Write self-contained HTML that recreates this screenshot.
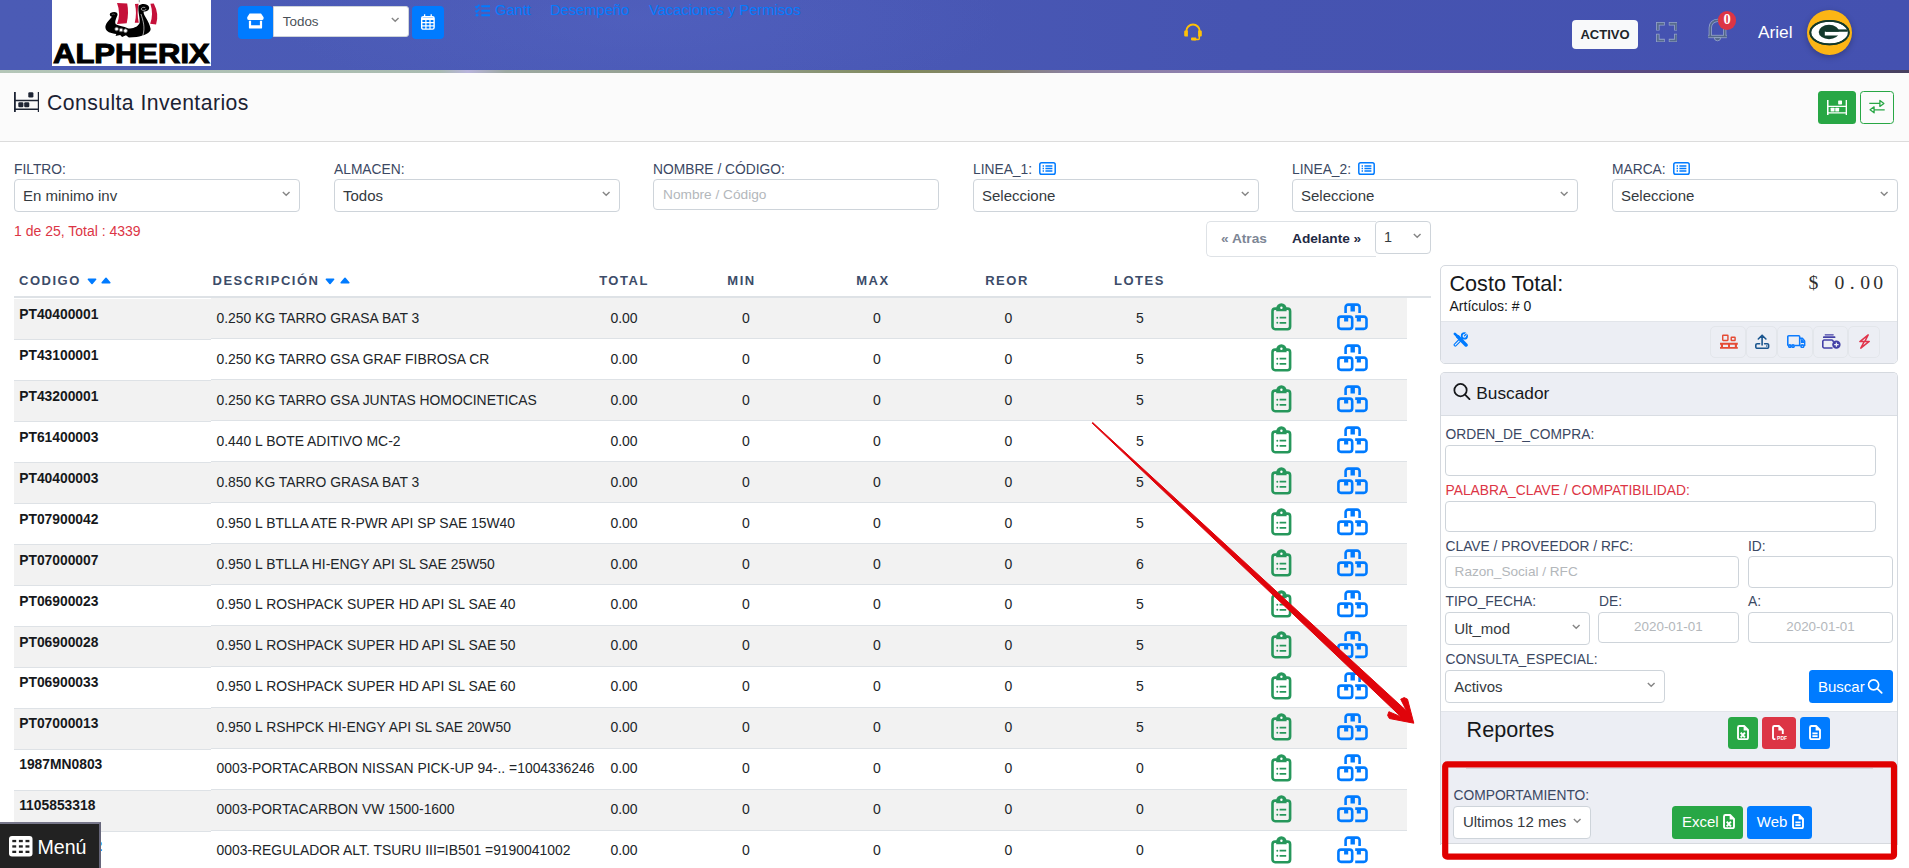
<!DOCTYPE html>
<html lang="es">
<head>
<meta charset="utf-8">
<title>Consulta Inventarios</title>
<style>
*{box-sizing:border-box;margin:0;padding:0}
html,body{width:1909px;height:868px;overflow:hidden;background:#fff}
body{font-family:"Liberation Sans",Arial,sans-serif;font-size:14.4px;color:#212529;position:relative}
svg{display:block}
.abs{position:absolute}

/* ---------- top bar ---------- */
.topbar{position:absolute;left:0;top:0;width:1909px;height:70px;background:#4a58b4;
 background-image:radial-gradient(ellipse 520px 120px at 640px 20px,rgba(88,104,200,.35),rgba(88,104,200,0) 70%),linear-gradient(90deg,#4b5bb5 0%,#4a59b6 40%,#4654b1 65%,#4451b0 100%)}
.strip{position:absolute;left:0;top:70px;width:1909px;height:4px;background:linear-gradient(180deg,rgba(255,255,255,0) 0,rgba(255,255,255,0) 72%,rgba(251,251,251,.75) 100%),linear-gradient(90deg,#b4c6b8 0%,#a9bbb0 23%,#b8b4dc 24.500%,#9da9a2 26.500%,#8f9a86 40%,#808a5c 47%,#84846c 52%,#8a80a0 56%,#8f7fb2 65%,#7a5fa2 75%,#5a4a82 85%,#47405f 100%)}
.logo{position:absolute;left:52px;top:0;width:159px;height:66px;background:#fff;overflow:hidden}
.logo .word{position:absolute;left:1.300px;top:38.100px;font-weight:700;font-size:27.200px;line-height:32px;color:#000;white-space:nowrap;transform-origin:0 0;transform:scaleX(1.140);letter-spacing:0;-webkit-text-stroke:1px #000}
.hbtn{position:absolute;top:6px;height:33px;background:#007bff;border-radius:4px;display:flex;align-items:center;justify-content:center}
.hsel{position:absolute;left:273px;top:6px;width:136px;height:31px;background:#fff;border:1px solid #ced4da;border-radius:0 3px 3px 0;font-size:13.400px;color:#495057;padding:0 0 0 8.800px;line-height:30px}
.chev{position:absolute;right:8.200px;top:50%;margin-top:-4.600px;width:8.400px;height:6.200px}
.nav{position:absolute;top:2px;left:475px;font-size:14.700px;line-height:17px;color:#047bfd;white-space:nowrap}
.nav a{color:inherit;text-decoration:none;position:absolute;top:0;white-space:nowrap}
.badge-act{position:absolute;left:1572px;top:20px;width:66px;height:29px;background:#f8f9fa;border-radius:4px;font-weight:700;font-size:13px;line-height:29px;text-align:center;color:#212529}
.uname{position:absolute;left:1758px;top:22px;font-size:17.3px;line-height:20px;color:#fff}
.avatar{position:absolute;left:1807.200px;top:9.900px;width:45px;height:45px;border-radius:50%;background:#fcb515;box-shadow:0 2px 6px rgba(0,0,0,.25)}
.notif{position:absolute;left:1718px;top:11.400px;width:18.200px;height:18.200px;border-radius:50%;background:#dc3545;color:#fff;font-family:"Liberation Serif",serif;font-weight:700;font-size:14.500px;line-height:17.600px;text-align:center}

/* ---------- title bar ---------- */
.titlebar{position:absolute;left:0;top:73px;width:1909px;height:69px;background:#fbfbfb;border-bottom:1px solid #dcdcdc}
.titlebar h1{position:absolute;left:47px;top:17px;font-weight:400;font-size:21.2px;line-height:26px;letter-spacing:.43px;color:#1b2233;white-space:nowrap}
.tbtn{position:absolute;top:17.900px;height:32.900px;border-radius:3.500px;display:flex;align-items:center;justify-content:center}

/* ---------- filters ---------- */
.fld{position:absolute;top:161.200px;width:286px}
.fld label,.lbl{display:block;font-size:13.800px;line-height:17px;color:#3b4863;white-space:nowrap}
.sel{position:relative;height:33px;border:1px solid #ced4da;border-radius:4px;background:#fff;font-size:15px;line-height:31px;color:#343a40;padding-left:8px;white-space:nowrap;overflow:hidden}
.inp{position:relative;height:30.700px;border:1px solid #ced4da;border-radius:4px;background:#fff;font-size:13.700px;line-height:29px;color:#b3b7bb;padding-left:9px;white-space:nowrap;overflow:hidden}
.fld .sel,.fld .inp{margin-top:.8px}
.count{position:absolute;left:14px;top:223.400px;font-size:14px;line-height:17px;color:#dc3545;white-space:nowrap}
.pager{position:absolute;left:1206px;top:221px;width:170px;height:36px;border:1px solid #dee2e6;border-right:0;border-radius:5px 0 0 5px;font-weight:700;font-size:13.7px;line-height:34px;white-space:nowrap}
.pager span{position:absolute;top:0}

/* ---------- table ---------- */
table.inv{position:absolute;left:14px;top:266px;width:1417px;border-collapse:separate;border-spacing:0;table-layout:fixed}
.inv thead th{height:32px;padding:0;border-bottom:2px solid #dee2e6;font-weight:700;font-size:13px;letter-spacing:1.520px;color:#3c4c69;text-align:center;vertical-align:top;line-height:17px;padding-top:5.500px;white-space:nowrap}
.inv thead th.l{text-align:left;padding-left:5px}
.inv thead th.d{padding-left:1.5px}
.inv thead th b{position:relative;font-weight:700}
.inv tbody td,.inv tbody th{height:41px;padding:0 0 .2px;border-bottom:1px solid #dee2e6;text-align:center;vertical-align:middle;font-size:14px;line-height:20px;white-space:nowrap;color:#212529}
.inv tbody tr:nth-child(odd) td,.inv tbody tr:nth-child(odd) th{background:#f2f2f2}
.inv tbody th{position:relative;top:1px;text-align:left;vertical-align:top;font-weight:700;font-size:13.850px;padding:6.800px 0 0 5.200px;line-height:17px;color:#16181b}
.inv tbody td.d{text-align:left;padding-left:5.500px;font-size:13.900px}
.inv tbody tr:nth-child(n+8) td{padding-bottom:2.200px}
.inv tbody tr:nth-child(n+10) th{padding-top:5.800px}
.inv tbody td.x{background:#fff !important;border-bottom-color:#fff}
.inv svg{margin:0 auto}
.inv tbody td svg{position:relative;top:-1px}
.inv tbody td:nth-child(9),.inv tbody td:nth-child(10){padding-bottom:0 !important}
.sd,.su{display:inline-block;position:relative;margin:0 !important}
.sd{left:5.9px;top:0.6px}
.su{left:10.6px;top:-1px}

/* ---------- aside ---------- */
.card{position:absolute;left:1440px;width:458px;background:#fff;border:1px solid #d5d9df;border-radius:5px;overflow:hidden}
.soft{background:#eceef4}
.cost{top:265px;height:99px}
.cost h2{position:absolute;left:8.500px;top:5.500px;font-weight:400;font-size:21.600px;line-height:24px;color:#16181b;white-space:nowrap}
.cost .amt{position:absolute;right:10.800px;top:4.200px;font-family:"Liberation Serif","DejaVu Serif",serif;font-size:19.700px;letter-spacing:3.100px;word-spacing:4.900px;line-height:24px;color:#2f2f2f;white-space:pre}
.cost .amt i{font-style:normal;margin:0 2.450px}
.cost .art{position:absolute;left:8.500px;top:31.700px;font-size:14px;line-height:16px;color:#16181b}
.cost .bar{position:absolute;left:0;top:55px;width:456px;height:43px;border-top:1px solid #e2e5ea}
.bgroup{position:absolute;left:269.200px;top:4.300px;height:32px;display:flex}
.bgroup span{display:flex;align-items:center;justify-content:center;height:32.200px;border:1px solid #e3e6eb;border-radius:5px;background:#eceef4;padding-bottom:1.500px;padding-left:.6px}
.srch{top:372px;height:472.500px;border-bottom:0;border-radius:5px 5px 0 0}
.srch .hd{position:absolute;left:0;top:0;width:456px;height:43px;border-bottom:1px solid #d9dde3}
.srch .hd h3{position:absolute;left:35.300px;top:9.600px;font-weight:400;font-size:17.3px;line-height:20px;color:#16181b}
.srch .lbl{position:absolute}
.srch .inp,.srch .sel{position:absolute}
.btn{position:absolute;border-radius:3.500px;color:#fff;font-size:15px;white-space:nowrap;display:flex;align-items:center;padding-bottom:1.200px}
.ft{position:absolute;left:0;top:338.400px;width:456px;height:132.700px;border-top:1px solid #e2e5ea;border-bottom:1px solid #d6d9de}
.ft h4{position:absolute;left:25.600px;top:5.200px;font-weight:400;font-size:21.600px;line-height:24px;color:#16181b}
.ft hr{position:absolute;left:24.500px;top:55.600px;width:407px;border:0;border-top:1px solid #d3d6dc}

.menu{position:absolute;left:0;top:822.300px;width:101px;height:50px;background:#222;border:0;border-top:2px solid #77778a;border-right:2px solid #66667a;color:#fff;font-family:inherit;font-size:19.600px;line-height:24px;text-align:left}
.menu svg{position:absolute;left:9px;top:11.700px}
.menu span{position:absolute;left:37.500px;top:10.600px}
.li{display:inline-block;margin-left:7.300px;vertical-align:-.8px}
</style>
</head>
<body>

<header class="topbar">
  <div class="logo">
<svg class="abs" style="left:43px;top:0" width="75" height="42" viewBox="0 0 1550 868">
<path d="M915 0V48" stroke="#111" stroke-width="9"/>
<path d="M455 60L665 72Q705 270 655 478L455 497Q540 280 455 60Z" fill="#c5113a"/>
<path d="M825 85L900 75Q860 270 905 470L822 472Q870 280 825 85Z" fill="#c5113a"/>
<path d="M1145 75L1215 72Q1330 290 1262 505L1140 490Q1215 290 1145 75Z" fill="#c5113a"/>
<path d="M350 345C280 430 210 490 215 570C220 660 330 690 440 705L425 745L520 722L560 765L640 728L700 775L860 765C1010 740 1150 680 1150 600C1120 430 990 320 1005 240C1085 240 1135 200 1115 140C1080 70 960 70 900 120C880 250 940 380 920 480C880 560 780 590 690 590C600 540 450 520 430 500C400 450 440 380 465 310C480 240 380 230 320 270C290 300 310 340 350 345Z" fill="#000"/>
<path d="M950 290C990 420 1045 560 985 750" fill="none" stroke="#fff" stroke-width="13"/>
<path d="M1040 160C1000 130 940 170 960 200C990 230 1050 215 1060 185" fill="none" stroke="#ddd" stroke-width="14"/>
<path d="M410 300C390 280 350 290 350 310" fill="none" stroke="#888" stroke-width="12"/>
<g fill="#fff" stroke="#555" stroke-width="16"><circle cx="447" cy="600" r="38"/><circle cx="538" cy="620" r="38"/><circle cx="630" cy="636" r="40"/></g>
</svg>
    <span class="word">ALPHERIX</span>
  </div>
  <div class="hbtn" style="left:238px;width:35px;padding-bottom:2.400px;padding-right:.4px"><svg width="17" height="16" viewBox="0 0 17 16"><path d="M2.600 .400h11.400l2.600 3.800v1.300a1.700 1.700 0 0 1-1.700 1.500H1.900A1.700 1.700 0 0 1 .2 5.500V4.200z" fill="#fff"/><path d="M1.900 7.800h2.200v4.400h8.800V7.800h2.200v6.600a1.200 1.200 0 0 1-1.200 1.200H3.100a1.200 1.200 0 0 1-1.200-1.200z" fill="#fff"/></svg></div>
  <div class="hsel">Todos<svg class="chev" viewBox="0 0 10 7"><path d="M1 1l4 4 4-4" fill="none" stroke="#868686" stroke-width="1.7"/></svg></div>
  <div class="hbtn" style="left:412px;width:32px;padding-bottom:2px"><svg width="14" height="16" viewBox="0 0 14 16"><path d="M3.600 .200v2.600M10.200 .200v2.600" stroke="#fff" stroke-width="1.300"/><rect x=".7" y="2.700" width="12.400" height="12.400" rx="1.600" fill="none" stroke="#fff" stroke-width="1.400"/><path d="M.7 5.400h12.400M.7 8.700h12.400M.7 11.900h12.400M4.900 5.400v9.700M9 5.400v9.700" stroke="#fff" stroke-width="1.200"/><path d="M.7 3.600h12.400v1.800H.7z" fill="#fff"/></svg></div>
  <nav class="nav">
    <svg class="abs" style="left:0;top:1.800px" width="15.400" height="13" viewBox="0 0 15.400 13"><g fill="none" stroke="#007bff" stroke-width="1.600"><path d="M.4 2.200l1.300 1.300L4.400.8M.4 6.600l1.300 1.300 2.700-2.700"/><path d="M6.300 2.300h9M6.300 6.700h9M6.300 11.200h9" stroke-width="1.900"/></g><circle cx="2" cy="11.200" r="1.400" fill="#007bff"/></svg>
    <a style="left:20px">Gantt</a>
    <a style="left:75px">Desempeño</a>
    <a style="left:174px">Vacaciones y Permisos</a>
  </nav>
  <svg class="abs" style="left:1184px;top:22.500px" width="18" height="18" viewBox="0 0 18 18"><path d="M2.300 9.500V8.200a6.700 6.700 0 0 1 13.400 0v1.300" fill="none" stroke="#ffc107" stroke-width="1.900"/><path d="M.2 8.400a1 1 0 0 1 1-1h2.700v6H1.200a1 1 0 0 1-1-1zM14.100 7.400h2.700a1 1 0 0 1 1 1v4a1 1 0 0 1-1 1h-2.700z" fill="#ffc107"/><path d="M15.300 13v2.400a1 1 0 0 1-1 1H9.600" fill="none" stroke="#ffc107" stroke-width="1.500"/><rect x="7" y="14.600" width="5.400" height="2.800" rx=".8" fill="#ffc107"/></svg>
  <svg class="abs" style="left:1655.700px;top:21.700px" width="21.600" height="20.400" viewBox="0 0 21.600 20.400"><g fill="none" stroke="#a3b2d2" stroke-opacity=".85" stroke-width="3.500"><path d="M1.800 8.600V1.800h7M12.800 1.800h7v6.800M19.800 11.800v6.800h-7M8.800 18.600h-7v-6.800"/></g><g fill="none" stroke="#566b8c" stroke-width="1.900"><path d="M1.800 7.900V1.800h6.300M13.500 1.800h6.300v6.100M19.800 12.500v6.100h-6.300M8.100 18.600H1.800v-6.100"/></g></svg>
  <svg class="abs" style="left:1706.700px;top:18.200px" width="21" height="24" viewBox="0 0 21 24"><g fill="none" stroke="#a3b2d2" stroke-opacity=".85" stroke-width="3.300" stroke-linejoin="round"><path d="M3.300 18.200V9.500a7.200 7.200 0 0 1 14.400 0v8.700"/><path d="M1.200 18.500h18.600"/></g><g fill="none" stroke="#536889" stroke-width="1.700" stroke-linejoin="round"><path d="M3.300 18.200V9.500a7.200 7.200 0 0 1 14.400 0v8.700"/><path d="M1.200 18.500h18.600"/></g><path d="M7.300 19.600h6.400a3.200 3.200 0 0 1-6.400 0z" fill="#536889" stroke="#a3b2d2" stroke-opacity=".8" stroke-width=".9"/></svg>
  <div class="badge-act">ACTIVO</div>
  <div class="notif">0</div>
  <div class="uname">Ariel</div>
  <div class="avatar"><svg width="45" height="45" viewBox="0 0 45 45"><ellipse cx="22.500" cy="22.600" rx="20.100" ry="12.700" fill="#12382b"/><ellipse cx="22.500" cy="22.600" rx="18.300" ry="10.900" fill="#fff"/><ellipse cx="22" cy="22" rx="10.300" ry="7.200" fill="#12382b"/><path d="M17.800 21.700h23v3.800H17.800z" fill="#fff"/><path d="M31.300 21.700h10v6h-10z" fill="#fff"/><path d="M18.900 19.400h21.600v2.350H18.900z" fill="#12382b"/><ellipse cx="22.500" cy="22.600" rx="19.200" ry="11.800" fill="none" stroke="#12382b" stroke-width="1.800"/></svg></div>
</header>
<div class="strip"></div>

<section class="titlebar">
  <svg class="abs" style="left:13.800px;top:19.200px" width="25.600" height="20.200" viewBox="0 0 25.600 20.200"><path d="M.9 0v20.200M24.700 0v20.200" stroke="#1d2434" stroke-width="1.800"/><path d="M.9 8.400h23.800M.9 17.300h23.800" stroke="#1d2434" stroke-width="1.500"/><g fill="#1d2434"><rect x="14.300" y=".3" width="5.100" height="5.100" rx="1.200"/><rect x="4.300" y="10.200" width="5.100" height="5.100" rx="1.200"/><rect x="10.200" y="10.200" width="5.100" height="5.100" rx="1.200"/></g></svg>
  <h1>Consulta Inventarios</h1>
  <div class="tbtn" style="left:1818.100px;width:38.100px;background:#28a745"><svg width="20.200" height="15.400" viewBox="0 0 21 16"><path d="M.8 0v16M20.200 0v16" stroke="#fff" stroke-width="1.600"/><path d="M.8 6.600h19.400M.8 13.400h19.400" stroke="#fff" stroke-width="1.500"/><g fill="#fff"><rect x="11.600" y=".4" width="4" height="4.200" rx=".6"/><rect x="3.800" y="8" width="4" height="4" rx=".6"/><rect x="8.600" y="8" width="4" height="4" rx=".6"/></g></svg></div>
  <div class="tbtn" style="left:1860.100px;width:34.200px;background:transparent;border:1px solid #28a745;padding-bottom:1.600px"><svg width="16" height="15" viewBox="0 0 16 15"><g fill="none" stroke="#28a745" stroke-width="1.300" stroke-linejoin="round"><path d="M.3 4.400h10.600M.3 4.400M10.900 1.400l4 3-4 3z"/><path d="M15.700 10.800H5.100M5.100 7.800l-4 3 4 3z"/></g></svg></div>
</section>

<form class="filters" onsubmit="return false">
  <div class="fld" style="left:14px"><label>FILTRO:</label><div class="sel">En minimo inv<svg class="chev" viewBox="0 0 10 7"><path d="M1 1l4 4 4-4" fill="none" stroke="#868686" stroke-width="1.7"/></svg></div></div>
  <div class="fld" style="left:334px"><label>ALMACEN:</label><div class="sel">Todos<svg class="chev" viewBox="0 0 10 7"><path d="M1 1l4 4 4-4" fill="none" stroke="#868686" stroke-width="1.7"/></svg></div></div>
  <div class="fld" style="left:653px"><label>NOMBRE / CÓDIGO:</label><div class="inp">Nombre / Código</div></div>
  <div class="fld" style="left:973px"><label>LINEA_1:<svg class="li" width="17" height="13" viewBox="0 0 17 13"><rect x=".8" y=".8" width="15.400" height="11.400" rx="1.800" fill="none" stroke="#007bff" stroke-width="1.500"/><path d="M3.600 4h1.400M3.600 6.500h1.400M3.600 9h1.400" stroke="#007bff" stroke-width="1.500"/><path d="M6.400 4h7M6.400 6.500h7M6.400 9h7" stroke="#007bff" stroke-width="1.500"/></svg></label><div class="sel">Seleccione<svg class="chev" viewBox="0 0 10 7"><path d="M1 1l4 4 4-4" fill="none" stroke="#868686" stroke-width="1.7"/></svg></div></div>
  <div class="fld" style="left:1292px"><label>LINEA_2:<svg class="li" width="17" height="13" viewBox="0 0 17 13"><rect x=".8" y=".8" width="15.400" height="11.400" rx="1.800" fill="none" stroke="#007bff" stroke-width="1.500"/><path d="M3.600 4h1.400M3.600 6.500h1.400M3.600 9h1.400" stroke="#007bff" stroke-width="1.500"/><path d="M6.400 4h7M6.400 6.500h7M6.400 9h7" stroke="#007bff" stroke-width="1.500"/></svg></label><div class="sel">Seleccione<svg class="chev" viewBox="0 0 10 7"><path d="M1 1l4 4 4-4" fill="none" stroke="#868686" stroke-width="1.7"/></svg></div></div>
  <div class="fld" style="left:1612px"><label>MARCA:<svg class="li" width="17" height="13" viewBox="0 0 17 13"><rect x=".8" y=".8" width="15.400" height="11.400" rx="1.800" fill="none" stroke="#007bff" stroke-width="1.500"/><path d="M3.600 4h1.400M3.600 6.500h1.400M3.600 9h1.400" stroke="#007bff" stroke-width="1.500"/><path d="M6.400 4h7M6.400 6.500h7M6.400 9h7" stroke="#007bff" stroke-width="1.500"/></svg></label><div class="sel">Seleccione<svg class="chev" viewBox="0 0 10 7"><path d="M1 1l4 4 4-4" fill="none" stroke="#868686" stroke-width="1.7"/></svg></div></div>
</form>
<div class="count">1 de 25, Total : 4339</div>
<div class="pager"><span style="left:14px;color:#7d8695">« Atras</span><span style="left:85px;color:#1f2a44">Adelante »</span></div>
<div class="sel abs" style="left:1375px;top:221px;width:56px;height:33px;font-size:14.4px">1<svg class="chev" viewBox="0 0 10 7"><path d="M1 1l4 4 4-4" fill="none" stroke="#868686" stroke-width="1.7"/></svg></div>

<svg width="0" height="0" style="position:absolute"><defs>
<symbol id="i-clip" viewBox="0 0 21 28"><rect x="1.5" y="5.6" width="17.6" height="20.6" rx="2.6" fill="none" stroke="#26975b" stroke-width="2.6"/><path d="M5.200 8.300V5.400A5.200 5.200 0 0 1 15.600 5.400V8.300z" fill="#26975b"/><circle cx="10.400" cy="4.700" r="1.200" fill="#fff"/><circle cx="6.3" cy="14.7" r=".95" fill="#26975b"/><circle cx="6.3" cy="19.8" r=".95" fill="#26975b"/><path d="M8.6 14.7h6.6M8.6 19.8h6.6" stroke="#26975b" stroke-width="1.7" fill="none"/></symbol>
<symbol id="i-box" viewBox="0 0 31 28"><g fill="none" stroke="#007bff" stroke-width="2.6"><path d="M8.6 10V4.2a2.6 2.6 0 0 1 2.6-2.6h8.8a2.6 2.6 0 0 1 2.6 2.6V10"/><rect x="1.4" y="13.6" width="13.8" height="12.3" rx="2.6"/><path d="M18.2 13.6h8.7a2.6 2.6 0 0 1 2.6 2.6v7.1a2.6 2.6 0 0 1-2.6 2.6h-8.7"/></g><path d="M13.5 1.6h4.4v7h-4.4zM7.1 13.6h4.1v5h-4.1zM19.8 13.6h4.1v5h-4.1z" fill="#007bff"/></symbol>
<symbol id="i-cd" viewBox="0 0 10 7"><path d="M1.4 1.3h7.2L5 5.4z" fill="#007bff" stroke="#007bff" stroke-width="1.6" stroke-linejoin="round"/></symbol>
<symbol id="i-cu" viewBox="0 0 10 7"><path d="M1.2 5.7h7.6L5 1.4z" fill="#007bff" stroke="#007bff" stroke-width="1.6" stroke-linejoin="round"/></symbol>
<symbol id="i-search" viewBox="0 0 18 18"><circle cx="7.700" cy="7.300" r="6.300" fill="none" stroke="#16181b" stroke-width="1.800"/><path d="M12.300 11.900l4.800 4.800" stroke="#16181b" stroke-width="1.900" stroke-linecap="round"/></symbol>
<symbol id="i-search-w" viewBox="0 0 19 18"><circle cx="7.6" cy="7.4" r="5.8" fill="none" stroke="#fff" stroke-width="1.9"/><path d="M11.9 11.7l5 5" stroke="#fff" stroke-width="2" stroke-linecap="round"/></symbol>
<symbol id="i-xls" viewBox="0 0 12 15.200"><path d="M1 2.500A1.500 1.500 0 0 1 2.500 1h4.600L11 4.900v7.800a1.500 1.500 0 0 1-1.500 1.500h-7A1.500 1.500 0 0 1 1 12.700z" fill="none" stroke="#fff" stroke-width="1.900" stroke-linejoin="round"/><path d="M6.600 .8l4.600 4.600H6.600z" fill="#fff"/><path d="M3.700 7.600l4.200 4.800M7.900 7.600l-4.200 4.800" stroke="#fff" stroke-width="1.900"/></symbol>
<symbol id="i-doc" viewBox="0 0 12 15.200"><path d="M1 2.500A1.500 1.500 0 0 1 2.500 1h4.600L11 4.900v7.800a1.500 1.500 0 0 1-1.500 1.500h-7A1.500 1.500 0 0 1 1 12.700z" fill="none" stroke="#fff" stroke-width="1.900" stroke-linejoin="round"/><path d="M6.600 .8l4.600 4.600H6.600z" fill="#fff"/><path d="M3.400 8.300h5.200M3.400 11.100h5.200" stroke="#fff" stroke-width="1.700"/></symbol>
<symbol id="i-pdf" viewBox="0 0 15.200 15.200"><path d="M3.400 14.200H2.500A1.500 1.500 0 0 1 1 12.700V2.500A1.500 1.500 0 0 1 2.500 1h4.400L10.800 4.900V9" fill="none" stroke="#fff" stroke-width="1.900" stroke-linejoin="round"/><path d="M6.400 .8l4.600 4.600H6.400z" fill="#fff"/><text x="5.100" y="14.800" font-family="Liberation Sans, sans-serif" font-weight="700" font-size="5.800" fill="#fff" textLength="10" lengthAdjust="spacingAndGlyphs">PDF</text></symbol>
<symbol id="i-tools" viewBox="0 0 15 15"><g stroke="#007bff" fill="none" stroke-linecap="round"><path d="M2.200 12.900l5-5.100" stroke-width="3.400"/><path d="M2.200 12.900l5-5.100" stroke="#eceef4" stroke-width="1.200"/><circle cx="11.300" cy="3.900" r="2.700" stroke-width="1.800" fill="#eceef4"/><path d="M11.300 3.900l3.200-3.200" stroke="#eceef4" stroke-width="2.400" stroke-linecap="butt"/><path d="M11.400 3.800l1.700-1.700" stroke-width="1.300"/><path d="M1.800 1.800l3.600 3.600" stroke-width="2.600"/><path d="M4.600 4.600l8.300 8.300" stroke-width="3.600"/></g></symbol>
<symbol id="i-pallet" viewBox="0 0 19 15"><g fill="none" stroke="#e54b35" stroke-width="1.5"><rect x="2.8" y="1" width="5.4" height="5.4" rx=".6"/><rect x="11.6" y="3.2" width="4" height="3.2" rx=".5"/></g><path d="M0 8.800h18.400v2.100H0zM0 13.100h18.400v1.900H0zM.9 10.800h2.200v2.400H.9zM8.300 10.800h2v2.400h-2zM15.300 10.800h2.200v2.400h-2.200z" fill="#e54b35"/></symbol>
<symbol id="i-upload" viewBox="0 0 15 15"><g fill="none" stroke="#1b568f" stroke-width="1.6" stroke-linecap="round" stroke-linejoin="round"><path d="M7.100 10.800V1.200M3.300 4.900L7.100 1.100l3.800 3.800"/><path d="M4.600 9.600H2.200a1.400 1.400 0 0 0-1.400 1.400v1.800a1.400 1.400 0 0 0 1.400 1.400h10a1.400 1.400 0 0 0 1.400-1.400V11a1.400 1.400 0 0 0-1.400-1.400H9.600"/></g><circle cx="11.700" cy="11.900" r=".75" fill="#1b568f"/></symbol>
<symbol id="i-truck" viewBox="0 0 19 13.400"><g fill="none" stroke="#0d7bfd" stroke-width="1.600" stroke-linejoin="round"><path d="M1.500 10.700A1 1 0 0 1 .8 9.700V1.800a1 1 0 0 1 1-1h10.100a1 1 0 0 1 1 1v8.900H7.600"/><path d="M12.900 3.400h2.700l2.500 2.900v4.400h-.8M12.900 10.700h1"/><circle cx="2.900" cy="11.300" r="1.250"/><circle cx="6.100" cy="11.300" r="1.250"/><circle cx="15.600" cy="11.400" r="1.350"/></g><path d="M14.200 4.300h1.100l2 2.300v1.500h-3.100z" fill="#0d7bfd"/></symbol>
<symbol id="i-wallet" viewBox="0 0 19 15"><g fill="none" stroke="#4340a6" stroke-linecap="round"><path d="M3.200 .8h8" stroke-width="1.200"/><path d="M1.800 3.100h10.800" stroke-width="1.700"/><path d="M10 13.900H2.200A1.400 1.400 0 0 1 .8 12.500V7.400A1.400 1.400 0 0 1 2.200 6h7.600a1.400 1.400 0 0 1 1.400 1.400" stroke-width="1.600"/></g><circle cx="14.400" cy="10.600" r="4.200" fill="#4340a6"/><path d="M14.400 8.400v4.400M12.200 10.600h4.400" stroke="#eef0f5" stroke-width="1.300"/></symbol>
<symbol id="i-bolt" viewBox="0 0 11 15"><path d="M9.200 .900L.900 7.600h4.300l-3.400 6.600 8.400-6.800H5.900z" fill="none" stroke="#e0344b" stroke-width="1.500" stroke-linejoin="round"/></symbol>
</defs></svg>
<table class="inv">
<colgroup><col style="width:197px"><col style="width:387px"><col style="width:52px"><col style="width:192px"><col style="width:70px"><col style="width:193px"><col style="width:70px"><col style="width:71px"><col style="width:71px"><col style="width:71px"><col style="width:19px"><col style="width:24px"></colgroup>
<thead><tr><th class="l">CODIGO<svg class="sd" width="10" height="7"><use href="#i-cd"/></svg><svg class="su" width="10" height="7"><use href="#i-cu"/></svg></th><th class="l d">DESCRIPCIÓN<svg class="sd" width="10" height="7"><use href="#i-cd"/></svg><svg class="su" width="10" height="7"><use href="#i-cu"/></svg></th><th>TOTAL</th><th><b style="left:-4.5px">MIN</b></th><th><b style="left:-4px">MAX</b></th><th><b style="left:-1.5px">REOR</b></th><th><b style="left:-.5px">LOTES</b></th><th></th><th></th><th></th><th></th><th></th></tr></thead>
<tbody>
<tr><th scope="row">PT40400001</th><td class="d">0.250 KG TARRO GRASA BAT 3</td><td>0.00</td><td>0</td><td>0</td><td>0</td><td>5</td><td></td><td><svg class="ic1" width="21" height="28"><use href="#i-clip"/></svg></td><td><svg class="ic2" width="31" height="28"><use href="#i-box"/></svg></td><td></td><td class="x"></td></tr>
<tr><th scope="row">PT43100001</th><td class="d">0.250 KG TARRO GSA GRAF FIBROSA CR</td><td>0.00</td><td>0</td><td>0</td><td>0</td><td>5</td><td></td><td><svg class="ic1" width="21" height="28"><use href="#i-clip"/></svg></td><td><svg class="ic2" width="31" height="28"><use href="#i-box"/></svg></td><td></td><td class="x"></td></tr>
<tr><th scope="row">PT43200001</th><td class="d">0.250 KG TARRO GSA JUNTAS HOMOCINETICAS</td><td>0.00</td><td>0</td><td>0</td><td>0</td><td>5</td><td></td><td><svg class="ic1" width="21" height="28"><use href="#i-clip"/></svg></td><td><svg class="ic2" width="31" height="28"><use href="#i-box"/></svg></td><td></td><td class="x"></td></tr>
<tr><th scope="row">PT61400003</th><td class="d">0.440 L BOTE ADITIVO MC-2</td><td>0.00</td><td>0</td><td>0</td><td>0</td><td>5</td><td></td><td><svg class="ic1" width="21" height="28"><use href="#i-clip"/></svg></td><td><svg class="ic2" width="31" height="28"><use href="#i-box"/></svg></td><td></td><td class="x"></td></tr>
<tr><th scope="row">PT40400003</th><td class="d">0.850 KG TARRO GRASA BAT 3</td><td>0.00</td><td>0</td><td>0</td><td>0</td><td>5</td><td></td><td><svg class="ic1" width="21" height="28"><use href="#i-clip"/></svg></td><td><svg class="ic2" width="31" height="28"><use href="#i-box"/></svg></td><td></td><td class="x"></td></tr>
<tr><th scope="row">PT07900042</th><td class="d">0.950 L BTLLA ATE R-PWR API SP SAE 15W40</td><td>0.00</td><td>0</td><td>0</td><td>0</td><td>5</td><td></td><td><svg class="ic1" width="21" height="28"><use href="#i-clip"/></svg></td><td><svg class="ic2" width="31" height="28"><use href="#i-box"/></svg></td><td></td><td class="x"></td></tr>
<tr><th scope="row">PT07000007</th><td class="d">0.950 L BTLLA HI-ENGY API SL SAE 25W50</td><td>0.00</td><td>0</td><td>0</td><td>0</td><td>6</td><td></td><td><svg class="ic1" width="21" height="28"><use href="#i-clip"/></svg></td><td><svg class="ic2" width="31" height="28"><use href="#i-box"/></svg></td><td></td><td class="x"></td></tr>
<tr><th scope="row">PT06900023</th><td class="d">0.950 L ROSHPACK SUPER HD API SL SAE 40</td><td>0.00</td><td>0</td><td>0</td><td>0</td><td>5</td><td></td><td><svg class="ic1" width="21" height="28"><use href="#i-clip"/></svg></td><td><svg class="ic2" width="31" height="28"><use href="#i-box"/></svg></td><td></td><td class="x"></td></tr>
<tr><th scope="row">PT06900028</th><td class="d">0.950 L ROSHPACK SUPER HD API SL SAE 50</td><td>0.00</td><td>0</td><td>0</td><td>0</td><td>5</td><td></td><td><svg class="ic1" width="21" height="28"><use href="#i-clip"/></svg></td><td><svg class="ic2" width="31" height="28"><use href="#i-box"/></svg></td><td></td><td class="x"></td></tr>
<tr><th scope="row">PT06900033</th><td class="d">0.950 L ROSHPACK SUPER HD API SL SAE 60</td><td>0.00</td><td>0</td><td>0</td><td>0</td><td>5</td><td></td><td><svg class="ic1" width="21" height="28"><use href="#i-clip"/></svg></td><td><svg class="ic2" width="31" height="28"><use href="#i-box"/></svg></td><td></td><td class="x"></td></tr>
<tr><th scope="row">PT07000013</th><td class="d">0.950 L RSHPCK HI-ENGY API SL SAE 20W50</td><td>0.00</td><td>0</td><td>0</td><td>0</td><td>5</td><td></td><td><svg class="ic1" width="21" height="28"><use href="#i-clip"/></svg></td><td><svg class="ic2" width="31" height="28"><use href="#i-box"/></svg></td><td></td><td class="x"></td></tr>
<tr><th scope="row">1987MN0803</th><td class="d">0003-PORTACARBON NISSAN PICK-UP 94-.. =1004336246</td><td>0.00</td><td>0</td><td>0</td><td>0</td><td>0</td><td></td><td><svg class="ic1" width="21" height="28"><use href="#i-clip"/></svg></td><td><svg class="ic2" width="31" height="28"><use href="#i-box"/></svg></td><td></td><td class="x"></td></tr>
<tr><th scope="row">1105853318</th><td class="d">0003-PORTACARBON VW 1500-1600</td><td>0.00</td><td>0</td><td>0</td><td>0</td><td>0</td><td></td><td><svg class="ic1" width="21" height="28"><use href="#i-clip"/></svg></td><td><svg class="ic2" width="31" height="28"><use href="#i-box"/></svg></td><td></td><td class="x"></td></tr>
<tr><th scope="row" style="color:#0d6efd">1987MN0822</th><td class="d">0003-REGULADOR ALT. TSURU III=IB501 =9190041002</td><td>0.00</td><td>0</td><td>0</td><td>0</td><td>0</td><td></td><td><svg class="ic1" width="21" height="28"><use href="#i-clip"/></svg></td><td><svg class="ic2" width="31" height="28"><use href="#i-box"/></svg></td><td></td><td class="x"></td></tr>
</tbody></table>

<aside>
 <section class="card cost">
  <h2>Costo Total:</h2>
  <div class="amt">$ 0<i>.</i>00</div>
  <div class="art">Artículos: # 0</div>
  <div class="bar soft">
   <svg class="abs" style="left:12.200px;top:10.400px" width="15.200" height="15"><use href="#i-tools"/></svg>
   <div class="bgroup"><span style="width:35.500px;padding-left:1.600px"><svg width="18.400" height="15"><use href="#i-pallet"/></svg></span><span style="width:31.600px;padding-left:2.600px"><svg width="15" height="15.200"><use href="#i-upload"/></svg></span><span style="width:36px;padding-left:2.600px"><svg width="18.700" height="13.200"><use href="#i-truck"/></svg></span><span style="width:35.200px"><svg width="19" height="15.100"><use href="#i-wallet"/></svg></span><span style="width:31.200px"><svg width="11" height="15"><use href="#i-bolt"/></svg></span></div>
  </div>
 </section>
 <section class="card srch">
  <div class="hd soft"><svg class="abs" style="left:12.200px;top:9.600px" width="17.600" height="17.600"><use href="#i-search"/></svg><h3>Buscador</h3></div>
  <label class="lbl" style="left:4.5px;top:53px">ORDEN_DE_COMPRA:</label>
  <div class="inp" style="left:4.200px;top:72.400px;width:431px;height:30.700px"></div>
  <label class="lbl" style="left:4.5px;top:109px;color:#dc3545">PALABRA_CLAVE / COMPATIBILIDAD:</label>
  <div class="inp" style="left:4.200px;top:128.200px;width:431px;height:30.600px"></div>
  <label class="lbl" style="left:4.5px;top:165px">CLAVE / PROVEEDOR / RFC:</label>
  <label class="lbl" style="left:307px;top:165px">ID:</label>
  <div class="inp" style="left:4.200px;top:183.200px;width:293.600px;height:31.700px;font-size:13.600px;padding-left:8.400px;line-height:29px">Razon_Social / RFC</div>
  <div class="inp" style="left:307px;top:183.200px;width:145px;height:31.700px"></div>
  <label class="lbl" style="left:4.5px;top:220px">TIPO_FECHA:</label>
  <label class="lbl" style="left:158px;top:220px">DE:</label>
  <label class="lbl" style="left:307px;top:220px">A:</label>
  <div class="sel" style="left:4.200px;top:239.400px;width:144.600px;height:32.700px;line-height:31px">Ult_mod<svg class="chev" viewBox="0 0 10 7"><path d="M1 1l4 4 4-4" fill="none" stroke="#868686" stroke-width="1.7"/></svg></div>
  <div class="inp" style="left:157px;top:239.400px;width:140.700px;height:30.700px;text-align:center;padding:0;font-size:13.400px;line-height:28.600px">2020-01-01</div>
  <div class="inp" style="left:307px;top:239.400px;width:145px;height:30.700px;text-align:center;padding:0;font-size:13.400px;line-height:28.600px">2020-01-01</div>
  <label class="lbl" style="left:4.5px;top:278px">CONSULTA_ESPECIAL:</label>
  <div class="sel" style="left:4.200px;top:297.200px;width:219.600px;height:32.800px;line-height:31px">Activos<svg class="chev" viewBox="0 0 10 7"><path d="M1 1l4 4 4-4" fill="none" stroke="#868686" stroke-width="1.7"/></svg></div>
  <div class="btn" style="left:368.400px;top:297px;width:83.600px;height:32.500px;background:#007bff;padding-left:8.600px;padding-bottom:0">Buscar<svg style="margin-left:2.600px;position:relative;top:-.2px" width="16.500" height="16.500"><use href="#i-search-w"/></svg></div>
  <div class="ft soft">
   <h4>Reportes</h4>
   <div class="btn" style="left:287.300px;top:4.600px;width:29.400px;height:31.600px;background:#28a745;justify-content:center"><svg width="12" height="15.200"><use href="#i-xls"/></svg></div>
   <div class="btn" style="left:321px;top:4.600px;width:33.700px;height:31.600px;background:#dc3545;justify-content:center"><svg width="15.200" height="15.200" style="position:relative;left:.4px"><use href="#i-pdf"/></svg></div>
   <div class="btn" style="left:359px;top:4.600px;width:30px;height:31.600px;background:#007bff;justify-content:center"><svg width="12" height="15.200"><use href="#i-doc"/></svg></div>
   <hr>
   <label class="lbl" style="left:12.500px;top:74.600px">COMPORTAMIENTO:</label>
   <div class="sel" style="left:12.300px;top:94px;width:137.600px;height:32.200px;line-height:30.400px;padding-left:8.600px">Ultimos 12 mes<svg class="chev" viewBox="0 0 10 7"><path d="M1 1l4 4 4-4" fill="none" stroke="#868686" stroke-width="1.7"/></svg></div>
   <div class="btn" style="left:231px;top:93.500px;width:71px;height:32.700px;background:#28a745;padding-left:10px">Excel<svg style="margin-left:4.600px;position:relative;top:.2px" width="12" height="15.200"><use href="#i-xls"/></svg></div>
   <div class="btn" style="left:305.800px;top:93.500px;width:65.100px;height:32.700px;background:#007bff;padding-left:10px">Web<svg style="margin-left:4.600px;position:relative;top:.2px" width="12" height="15.200"><use href="#i-doc"/></svg></div>
  </div>
 </section>
</aside>


<svg class="abs" style="left:0;top:0;pointer-events:none" width="1909" height="868" viewBox="0 0 1909 868">
<polygon points="1413.8,723.2 1389.4,718.5 1387.6,715.4 1388.9,711.7 1401.2,716.9 1092.1,423.1 1092.7,422.5 1406.7,711.1 1400.7,699.2 1404.2,697.6 1407.5,699.2" fill="#e0040b" stroke="#e0040b" stroke-width="1" stroke-linejoin="round"/>
<rect x="1445.200" y="764.300" width="448.800" height="92.400" rx="2" fill="none" stroke="#e00000" stroke-width="6.200"/>
</svg>
<button class="menu" type="button"><svg width="24" height="21" viewBox="0 0 24 21"><rect x="0" y="0" width="23.500" height="20.600" rx="3" fill="#fff"/><g fill="#222"><rect x="3.300" y="3.900" width="3.900" height="2.300"/><rect x="9.900" y="3.900" width="3.900" height="2.300"/><rect x="16.500" y="3.900" width="3.900" height="2.300"/><rect x="3.300" y="9.300" width="3.900" height="2.300"/><rect x="9.900" y="9.300" width="3.900" height="2.300"/><rect x="16.500" y="9.300" width="3.900" height="2.300"/><rect x="3.300" y="14.700" width="3.900" height="2.300"/><rect x="9.900" y="14.700" width="3.900" height="2.300"/><rect x="16.500" y="14.700" width="3.900" height="2.300"/></g></svg><span>Menú</span></button>


</body>
</html>
